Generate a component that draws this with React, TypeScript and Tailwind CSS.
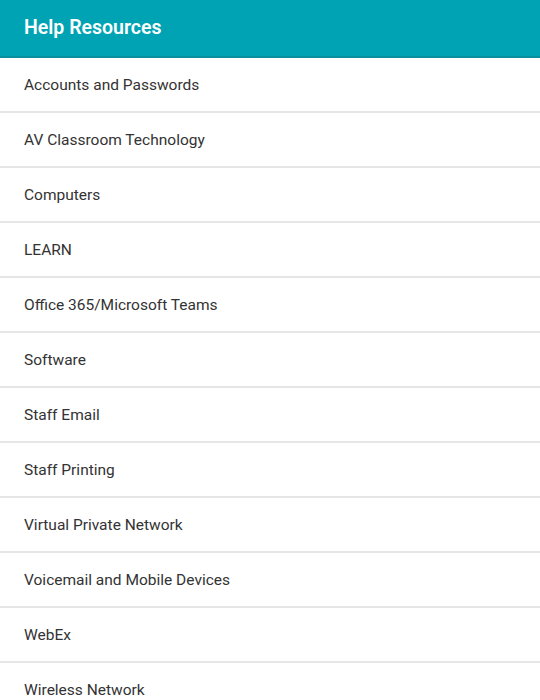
const items = [
  'Accounts and Passwords',
  'AV Classroom Technology',
  'Computers',
  'LEARN',
  'Office 365/Microsoft Teams',
  'Software',
  'Staff Email',
  'Staff Printing',
  'Virtual Private Network',
  'Voicemail and Mobile Devices',
  'WebEx',
  'Wireless Network',
];

export default function App() {
  return (
    <div className="w-[540px] h-[700px] overflow-hidden bg-white font-['Roboto',sans-serif]">
      {/* Header bar */}
      <div className="h-[58px] bg-[#00a3b3] border-b-2 border-[#0a8f9c] flex items-center px-6">
        <h2 className="text-[19.5px] font-semibold text-white">Help Resources</h2>
      </div>
      <ul>
        {items.map((item) => (
          <li
            key={item}
            className="h-[55px] border-b-2 border-[#e6e6e6] flex items-center px-6 pt-[2px] text-[15.5px] text-[#333333]"
          >
            {item}
          </li>
        ))}
      </ul>
    </div>
  );
}
